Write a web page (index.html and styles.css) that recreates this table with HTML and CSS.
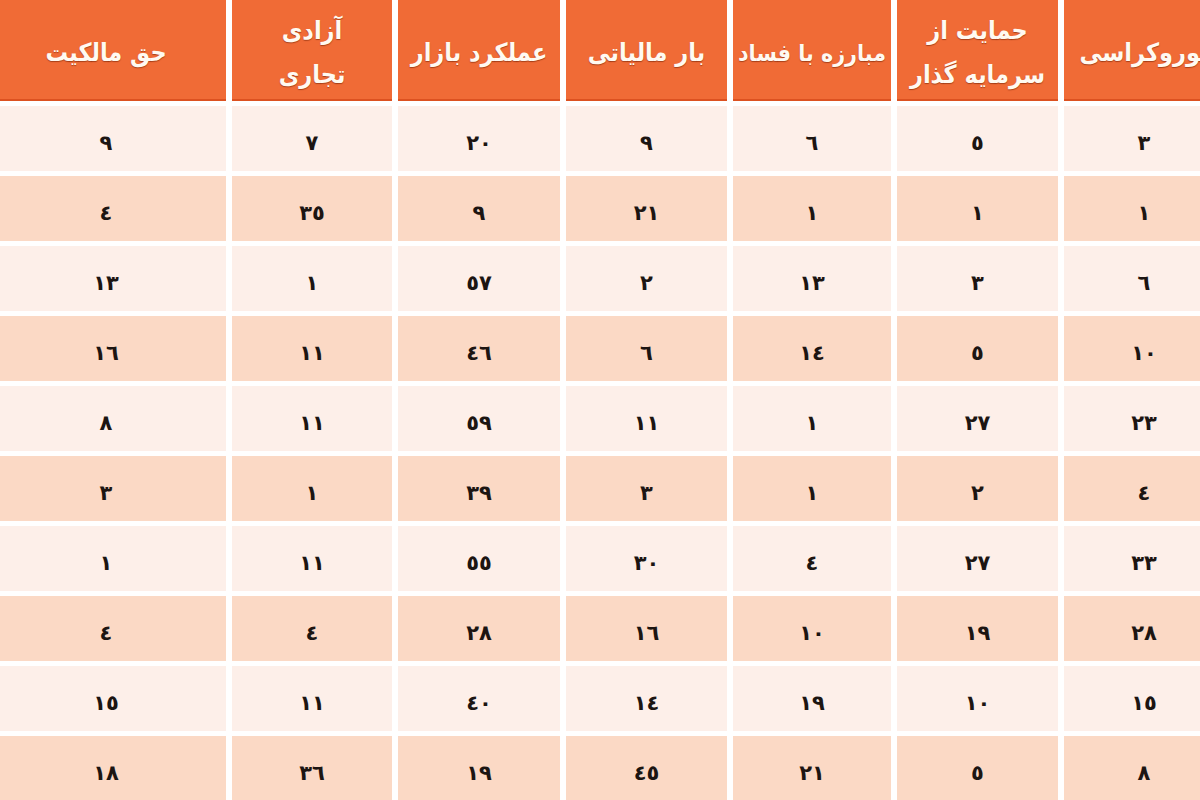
FILE: index.html
```html
<!DOCTYPE html>
<html lang="fa" dir="ltr">
<head>
<meta charset="utf-8">
<title>جدول</title>
<link rel="stylesheet" href="styles.css">
</head>
<body>
<div class="table">
  <div class="row head">
    <div class="cell">بوروکراسی</div>
    <div class="cell">حمایت از<br>سرمایه گذار</div>
    <div class="cell tight">مبارزه با فساد</div>
    <div class="cell">بار مالیاتی</div>
    <div class="cell">عملکرد بازار</div>
    <div class="cell">آزادی<br>تجاری</div>
    <div class="cell">حق مالکیت</div>
  </div>
  <div class="row light"><div class="cell">٣</div><div class="cell">٥</div><div class="cell">٦</div><div class="cell">٩</div><div class="cell">٢٠</div><div class="cell">٧</div><div class="cell">٩</div></div>
  <div class="row dark"><div class="cell">١</div><div class="cell">١</div><div class="cell">١</div><div class="cell">٢١</div><div class="cell">٩</div><div class="cell">٣٥</div><div class="cell">٤</div></div>
  <div class="row light"><div class="cell">٦</div><div class="cell">٣</div><div class="cell">١٣</div><div class="cell">٢</div><div class="cell">٥٧</div><div class="cell">١</div><div class="cell">١٣</div></div>
  <div class="row dark"><div class="cell">١٠</div><div class="cell">٥</div><div class="cell">١٤</div><div class="cell">٦</div><div class="cell">٤٦</div><div class="cell">١١</div><div class="cell">١٦</div></div>
  <div class="row light"><div class="cell">٢٣</div><div class="cell">٢٧</div><div class="cell">١</div><div class="cell">١١</div><div class="cell">٥٩</div><div class="cell">١١</div><div class="cell">٨</div></div>
  <div class="row dark"><div class="cell">٤</div><div class="cell">٢</div><div class="cell">١</div><div class="cell">٣</div><div class="cell">٣٩</div><div class="cell">١</div><div class="cell">٣</div></div>
  <div class="row light"><div class="cell">٣٣</div><div class="cell">٢٧</div><div class="cell">٤</div><div class="cell">٣٠</div><div class="cell">٥٥</div><div class="cell">١١</div><div class="cell">١</div></div>
  <div class="row dark"><div class="cell">٢٨</div><div class="cell">١٩</div><div class="cell">١٠</div><div class="cell">١٦</div><div class="cell">٢٨</div><div class="cell">٤</div><div class="cell">٤</div></div>
  <div class="row light"><div class="cell">١٥</div><div class="cell">١٠</div><div class="cell">١٩</div><div class="cell">١٤</div><div class="cell">٤٠</div><div class="cell">١١</div><div class="cell">١٥</div></div>
  <div class="row dark"><div class="cell">٨</div><div class="cell">٥</div><div class="cell">٢١</div><div class="cell">٤٥</div><div class="cell">١٩</div><div class="cell">٣٦</div><div class="cell">١٨</div></div>
</div>
</body>
</html>
```
FILE: styles.css
```css
html, body {
  margin: 0;
  padding: 0;
  background: #ffffff;
  overflow: hidden;
}

body {
  width: 1200px;
  height: 800px;
  font-family: "DejaVu Sans", "Noto Sans", sans-serif;
}

.table {
  width: 1238px;
  margin-left: -14px;
  display: flex;
  flex-direction: column;
  gap: 5px;
}

.row {
  direction: rtl;
  display: grid;
  grid-template-columns: 160px 161px 158px 161px 162px 160px 240px;
  column-gap: 6px;
  height: 65px;
}

.cell {
  display: flex;
  align-items: center;
  justify-content: center;
  text-align: center;
}

.head {
  height: 101px;
}

.head .cell {
  background: #f06b36;
  border-bottom: 2px solid #dc5120;
  box-sizing: border-box;
  color: #fffaf2;
  font-family: "DejaVu Sans Condensed", "DejaVu Sans", sans-serif;
  font-weight: bold;
  font-size: 25px;
  line-height: 44px;
  white-space: nowrap;
  overflow: hidden;
  text-shadow: 0 1px 1px rgba(110, 30, 0, 0.55);
  padding-top: 6px;
}

.head .tight {
  font-size: 23px;
}

.light .cell,
.dark .cell {
  color: #1c1512;
  font-weight: bold;
  font-size: 21px;
  padding-top: 8px;
  box-sizing: border-box;
}

.light .cell {
  background: #fdefe9;
}

.dark .cell {
  background: #fbd9c5;
}
```
